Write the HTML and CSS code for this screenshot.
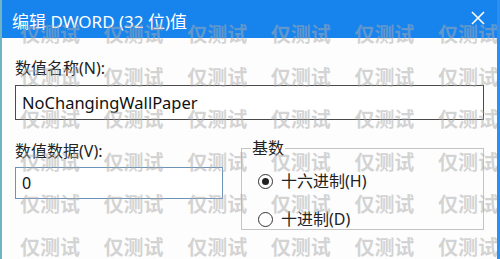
FILE: index.html
```html
<!DOCTYPE html>
<html lang="zh-CN">
  <head>
    <meta charset="UTF-8" />
    <meta name="viewport" content="width=device-width, initial-scale=1.0" />
    <title>编辑 DWORD (32 位)值</title>
    <link rel="stylesheet" href="styles.css">
  </head>
  <body>
    <div class="dialog">
      <header class="titlebar">
        <h1>编辑 DWORD (32 位)值</h1>
        <span class="close">
          <svg width="14" height="14" viewBox="0 0 14 14">
            <path d="M1 1 L13 13 M13 1 L1 13" stroke="#fff" stroke-width="1.6" fill="none" />
          </svg>
        </span>
      </header>

      <div class="content">
        <label class="field-label">数值名称(N):</label>
        <div class="textbox name-box">NoChangingWallPaper</div>

        <div class="lower">
          <div class="data-col">
            <label class="field-label">数值数据(V):</label>
            <div class="textbox data-box">0</div>
          </div>

          <fieldset class="base-group">
            <legend>基数</legend>
            <div class="radio-row">
              <span class="radio checked"></span>
              <span>十六进制(H)</span>
            </div>
            <div class="radio-row">
              <span class="radio"></span>
              <span>十进制(D)</span>
            </div>
          </fieldset>
        </div>
      </div>

      <!-- watermark overlay -->
      <div class="watermark">
        <span>仅测试</span><span>仅测试</span><span>仅测试</span><span>仅测试</span><span>仅测试</span><span>仅测试</span>
        <span>仅测试</span><span>仅测试</span><span>仅测试</span><span>仅测试</span><span>仅测试</span><span>仅测试</span>
        <span>仅测试</span><span>仅测试</span><span>仅测试</span><span>仅测试</span><span>仅测试</span><span>仅测试</span>
        <span>仅测试</span><span>仅测试</span><span>仅测试</span><span>仅测试</span><span>仅测试</span><span>仅测试</span>
        <span>仅测试</span><span>仅测试</span><span>仅测试</span><span>仅测试</span><span>仅测试</span><span>仅测试</span>
        <span>仅测试</span><span>仅测试</span><span>仅测试</span><span>仅测试</span><span>仅测试</span><span>仅测试</span>
      </div>
    </div>
  </body>
</html>
```

FILE: styles.css
```css
/* General Styles */
body {
  margin: 0;
  padding: 0;
  background: #fff;
  font-family: "Noto Sans", "Noto Sans CJK SC", sans-serif;
  color: #222;
}

.dialog {
  position: relative;
  width: 500px;
  height: 259px;
  box-sizing: border-box;
  background: #fdfdfd;
  border-left: 2px solid #6fb3c4;
  border-right: 3px solid #2a8ff0;
  overflow: hidden;
}

/* Title bar */
.titlebar {
  height: 38px;
  margin-left: -2px;
  background: #1784ee;
  display: flex;
  align-items: center;
  justify-content: space-between;
  padding: 0 12px 0 12px;
}

.titlebar h1 {
  margin: 0;
  font-size: 17px;
  font-weight: normal;
  color: #fff;
  line-height: 20px;
  padding-top: 5px;
}

.close {
  display: flex;
  margin-bottom: 2px;
}

/* Content */
.content {
  padding: 20px 0 0 13px;
}

.field-label {
  display: block;
  font-size: 16px;
  line-height: 20px;
  color: #222;
}

.textbox {
  box-sizing: border-box;
  background: #fff;
  color: #111;
  padding: 0 6px;
  display: flex;
  align-items: center;
}

.name-box {
  margin-top: 7px;
  width: 469px;
  height: 35px;
  border: 1px solid #4a4a4a;
  font-size: 16.5px;
}

.lower {
  display: flex;
  margin-top: 21px;
}

.data-col {
  width: 208px;
}

.data-box {
  margin-top: 6px;
  width: 208px;
  height: 32px;
  border: 1px solid #6d93b6;
  font-size: 16px;
}

.base-group {
  margin: -2px 0 0 18px;
  padding: 5px 0 0 16px;
  width: 243px;
  height: 91px;
  box-sizing: border-box;
  border: 1px solid #c4c4c4;
}

.base-group legend {
  font-size: 16px;
  line-height: 18px;
  padding: 0 1px;
  margin-left: -7px;
  color: #222;
}

.radio-row {
  display: flex;
  align-items: center;
  gap: 8px;
  font-size: 16px;
  line-height: 20px;
  height: 38px;
}

.radio {
  width: 13px;
  height: 13px;
  border: 1px solid #333;
  border-radius: 50%;
  background: #fff;
  display: flex;
  align-items: center;
  justify-content: center;
}

.radio.checked::after {
  content: "";
  width: 7px;
  height: 7px;
  border-radius: 50%;
  background: #222;
}

/* Watermark */
.watermark {
  position: absolute;
  top: 24px;
  left: 18px;
  display: grid;
  grid-template-columns: repeat(6, 83.6px);
  grid-auto-rows: 42.6px;
  pointer-events: none;
}

.watermark span {
  font-family: "Noto Sans CJK SC", sans-serif;
  font-size: 20px;
  font-weight: bold;
  line-height: 20px;
  color: rgba(170, 170, 170, 0.5);
}
```
